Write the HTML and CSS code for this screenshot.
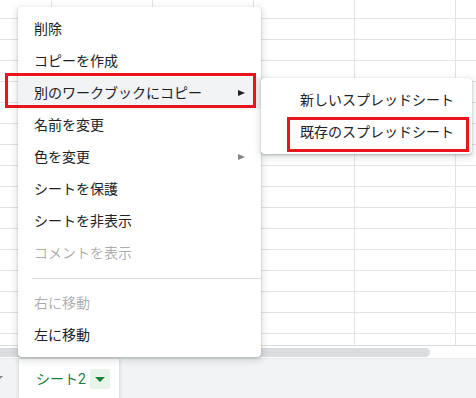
FILE: index.html
```html
<!DOCTYPE html>
<html lang="ja">
<head>
<meta charset="utf-8">
<link rel="stylesheet" href="styles.css">
</head>
<body>
<div class="sheet"></div>
<div class="hscroll"><div class="thumb"></div></div>
<div class="tabbar">
  <div class="caret"></div>
  <div class="tab">
    <span class="tab-name">シート2</span>
    <span class="tab-drop"><span class="tri-down"></span></span>
  </div>
</div>

<div class="menu main-menu">
  <div class="item">削除</div>
  <div class="item">コピーを作成</div>
  <div class="item active">別のワークブックにコピー<span class="arrow"></span></div>
  <div class="item">名前を変更</div>
  <div class="item">色を変更<span class="arrow gray"></span></div>
  <div class="item">シートを保護</div>
  <div class="item">シートを非表示</div>
  <div class="item disabled">コメントを表示</div>
  <div class="sep"></div>
  <div class="item disabled">右に移動</div>
  <div class="item">左に移動</div>
</div>

<div class="menu sub-menu">
  <div class="item">新しいスプレッドシート</div>
  <div class="item">既存のスプレッドシート</div>
</div>

<div class="mark mark-1"></div>
<div class="mark mark-2"></div>
</body>
</html>
```

FILE: styles.css
```css
html, body {
  margin: 0;
  padding: 0;
}
body {
  width: 476px;
  height: 398px;
  overflow: hidden;
  position: relative;
  background: #fff;
  font-family: Roboto, "Noto Sans CJK JP", sans-serif;
  font-size: 14px;
  color: #202124;
}
.sheet {
  height: 346px;
  border-bottom: 1px solid #dadce0;
  box-sizing: border-box;
  background-color: #fff;
  background-image:
    linear-gradient(to bottom, #e2e3e3 1px, transparent 1px),
    linear-gradient(to right, #e2e3e3 1px, transparent 1px);
  background-size: 100% 21px, 101px 100%;
  background-position: 0 18px, 51px 0;
}
.hscroll {
  height: 12px;
  padding-top: 2px;
  box-sizing: border-box;
  background: #fff;
}
.thumb {
  margin-left: -20px;
  width: 450px;
  height: 9px;
  border-radius: 5px;
  background: #dadce0;
}
.tabbar {
  height: 40px;
  background: #f1f3f4;
  border-top: 1px solid #e8eaed;
  box-sizing: border-box;
  display: flex;
  align-items: stretch;
}
.caret {
  align-self: center;
  margin-left: -5px;
  margin-top: -2px;
  width: 0;
  height: 0;
  border-left: 4px solid transparent;
  border-right: 4px solid transparent;
  border-top: 4px solid #80868b;
}
.tab {
  margin-left: 16px;
  width: 100px;
  box-sizing: border-box;
  background: #fff;
  padding-left: 17px;
  display: flex;
  align-items: center;
  gap: 4px;
  box-shadow: 0 1px 3px 1px rgba(60, 64, 67, 0.15);
}
.tab-name {
  color: #188038;
  font-weight: 400;
  font-size: 14px;
  line-height: 20px;
}
.tab-drop {
  width: 20px;
  height: 20px;
  border-radius: 2px;
  background: #e6f4ea;
  display: flex;
  align-items: center;
  justify-content: center;
}
.tri-down {
  width: 0;
  height: 0;
  border-left: 5px solid transparent;
  border-right: 5px solid transparent;
  border-top: 5px solid #188038;
  margin-top: 1px;
}
.menu {
  position: absolute;
  background: #fff;
  border-radius: 4px;
  padding: 6px 0;
  box-shadow: 0 2px 6px 2px rgba(60, 64, 67, 0.15), 0 1px 2px rgba(60, 64, 67, 0.3);
}
.main-menu {
  left: 18px;
  top: 7px;
  width: 243px;
}
.sub-menu {
  left: 261px;
  top: 78px;
  width: 211px;
}
.item {
  height: 32px;
  display: flex;
  align-items: center;
  justify-content: space-between;
  padding: 0 16px;
  white-space: nowrap;
  line-height: 20px;
}
.sub-menu .item {
  padding-left: 39px;
  padding-right: 17px;
}
.item.active {
  background: #f1f3f4;
}
.item.disabled {
  color: rgba(32, 33, 36, 0.38);
}
.arrow {
  width: 0;
  height: 0;
  border-top: 3.5px solid transparent;
  border-bottom: 3.5px solid transparent;
  border-left: 7px solid #202124;
}
.arrow.gray {
  border-left-color: #80868b;
}
.sep {
  height: 1px;
  background: #dadce0;
  margin: 9px 0 8px 14px;
}
.mark {
  position: absolute;
  border: 3px solid #e8141f;
  box-sizing: border-box;
}
.mark-1 {
  left: 5px;
  top: 73px;
  width: 251px;
  height: 35px;
}
.mark-2 {
  left: 287px;
  top: 117px;
  width: 182px;
  height: 35px;
}
```
